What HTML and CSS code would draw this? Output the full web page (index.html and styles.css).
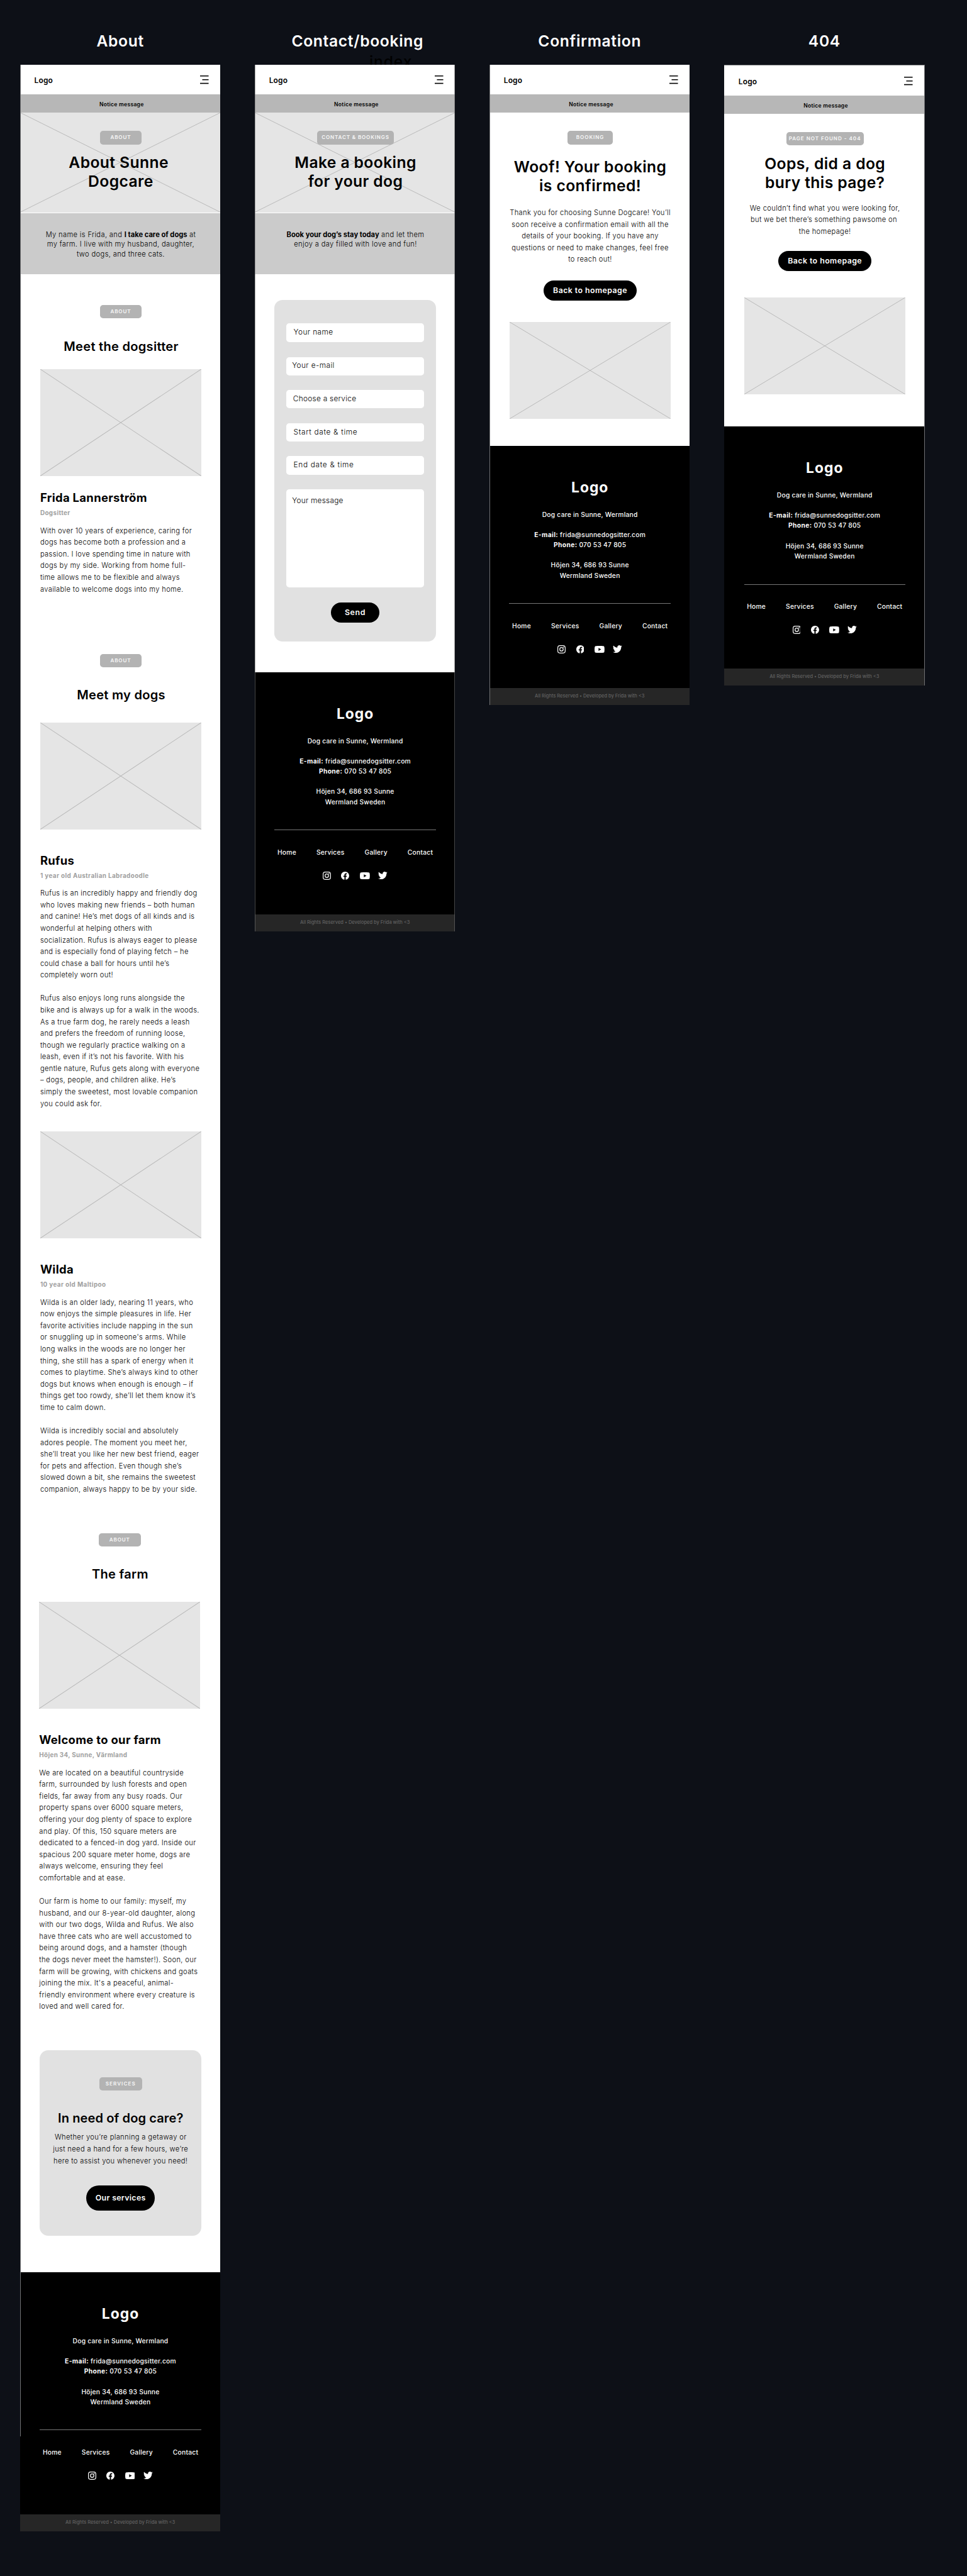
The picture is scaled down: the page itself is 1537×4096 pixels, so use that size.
FILE: index.html
```
<!DOCTYPE html>
<html lang="en">
<head>
<meta charset="utf-8">
<title>Sunne Dogcare – mobile wireframes</title>
<link rel="stylesheet" href="styles.css">
</head>
<body>
<svg class="sprite" aria-hidden="true">
  <symbol id="burger" viewBox="0 0 17 17"><path d="M0 1h17M4.3 8.3H17M0 15.600h17" stroke="#000" stroke-width="2" fill="none"/></symbol>
  <symbol id="cross" viewBox="0 0 100 100" preserveAspectRatio="none"><path d="M0 0L100 100M100 0L0 100" stroke="#b9b9b9" stroke-width="1" fill="none" vector-effect="non-scaling-stroke"/></symbol>
  <symbol id="instagram" viewBox="0 0 16 16"><rect x=".75" y=".75" width="14.500" height="14.500" rx="4" fill="none" stroke="#fff" stroke-width="1.500"/><circle cx="8" cy="8" r="3.400" fill="none" stroke="#fff" stroke-width="1.500"/><circle cx="12.200" cy="3.800" r="1" fill="#fff"/></symbol>
  <symbol id="facebook" viewBox="8 8 496 496"><path fill="#fff" d="M504 256C504 119 393 8 256 8S8 119 8 256c0 123.780 90.690 226.380 209.250 245V327.690h-63V256h63v-54.640c0-62.150 37-96.480 93.670-96.480 27.140 0 55.520 4.840 55.520 4.840v61h-31.280c-30.800 0-40.410 19.120-40.410 38.730V256h68.780l-11 71.690h-57.780V501C413.310 482.380 504 379.780 504 256z"/></symbol>
  <symbol id="youtube" viewBox="14 64 548 384"><path fill="#fff" d="M549.655 124.083c-6.281-23.650-24.787-42.276-48.284-48.597C458.781 64 288 64 288 64S117.220 64 74.629 75.486c-23.497 6.322-42.003 24.947-48.284 48.597-11.412 42.867-11.412 132.305-11.412 132.305s0 89.438 11.412 132.305c6.281 23.650 24.787 41.500 48.284 47.821C117.220 448 288 448 288 448s170.780 0 213.371-11.486c23.497-6.321 42.003-24.171 48.284-47.821 11.412-42.867 11.412-132.305 11.412-132.305s0-89.438-11.412-132.305zm-317.510 213.508V175.185l142.739 81.205-142.739 81.201z"/></symbol>
  <symbol id="twitter" viewBox="0 48 512 416"><path fill="#fff" d="M459.370 151.716c.325 4.548.325 9.097.325 13.645 0 138.720-105.583 298.558-298.558 298.558-59.452 0-114.680-17.219-161.137-47.106 8.447.974 16.568 1.299 25.340 1.299 49.055 0 94.213-16.568 130.274-44.832-46.132-.975-84.792-31.188-98.112-72.772 6.498.974 12.995 1.624 19.818 1.624 9.421 0 18.843-1.300 27.614-3.573-48.081-9.747-84.143-51.980-84.143-102.985v-1.299c13.969 7.797 30.214 12.670 47.431 13.319-28.264-18.843-46.781-51.005-46.781-87.391 0-19.492 5.197-37.360 14.294-52.954 51.655 63.675 129.300 105.258 216.365 109.807-1.624-7.797-2.599-15.918-2.599-24.040 0-57.828 46.782-104.934 104.934-104.934 30.213 0 57.502 12.670 76.670 33.137 23.715-4.548 46.456-13.320 66.599-25.340-7.798 24.366-24.366 44.833-46.132 57.827 21.117-2.273 41.584-8.122 60.426-16.243-14.292 20.791-32.161 39.308-52.628 54.253z"/></symbol>
</svg>

<main class="board">

  <article class="screen">
    <h1 class="screen-title">About</h1>
    <div class="phone phone-about">
      <header class="nav"><span class="nav-logo">Logo</span><svg class="burger"><use href="#burger"/></svg></header>
      <p class="notice">Notice message</p>
      <section class="hero">
        <svg class="cross"><use href="#cross"/></svg>
        <span class="badge">ABOUT</span>
        <h2 class="headline">About Sunne&nbsp;<br>Dogcare</h2>
      </section>
      <p class="intro">My name is Frida, and <b>I take care of dogs</b> at<br>my farm. I live with my husband, daughter,<br>two dogs, and three cats.</p>

      <section class="block block-sitter">
        <span class="badge">ABOUT</span>
        <h2 class="block-title">Meet the dogsitter</h2>
        <svg class="picture"><use href="#cross"/></svg>
        <h3 class="name">Frida Lannerström</h3>
        <p class="role">Dogsitter</p>
        <p class="copy">With over 10 years of experience, caring for<br>dogs has become both a profession and a<br>passion. I love spending time in nature with<br>dogs by my side. Working from home full-<br>time allows me to be flexible and always<br>available to welcome dogs into my home.</p>
      </section>

      <section class="block block-dogs">
        <span class="badge">ABOUT</span>
        <h2 class="block-title">Meet my dogs</h2>
        <svg class="picture"><use href="#cross"/></svg>
        <h3 class="name">Rufus</h3>
        <p class="role">1 year old Australian Labradoodle</p>
        <p class="copy">Rufus is an incredibly happy and friendly dog<br>who loves making new friends – both human<br>and canine! He’s met dogs of all kinds and is<br>wonderful at helping others with<br>socialization. Rufus is always eager to please<br>and is especially fond of playing fetch – he<br>could chase a ball for hours until he’s<br>completely worn out!</p>
        <p class="copy copy-next">Rufus also enjoys long runs alongside the<br>bike and is always up for a walk in the woods.<br>As a true farm dog, he rarely needs a leash<br>and prefers the freedom of running loose,<br>though we regularly practice walking on a<br>leash, even if it’s not his favorite. With his<br>gentle nature, Rufus gets along with everyone<br>– dogs, people, and children alike. He’s<br>simply the sweetest, most lovable companion<br>you could ask for.</p>
        <svg class="picture picture-second"><use href="#cross"/></svg>
        <h3 class="name">Wilda</h3>
        <p class="role">10 year old Maltipoo</p>
        <p class="copy">Wilda is an older lady, nearing 11 years, who<br>now enjoys the simple pleasures in life. Her<br>favorite activities include napping in the sun<br>or snuggling up in someone's arms. While<br>long walks in the woods are no longer her<br>thing, she still has a spark of energy when it<br>comes to playtime. She’s always kind to other<br>dogs but knows when enough is enough – if<br>things get too rowdy, she’ll let them know it’s<br>time to calm down.</p>
        <p class="copy copy-next">Wilda is incredibly social and absolutely<br>adores people. The moment you meet her,<br>she’ll treat you like her new best friend, eager<br>for pets and affection. Even though she’s<br>slowed down a bit, she remains the sweetest<br>companion, always happy to be by your side.</p>
      </section>

      <section class="block block-farm">
        <span class="badge">ABOUT</span>
        <h2 class="block-title">The farm</h2>
        <svg class="picture"><use href="#cross"/></svg>
        <h3 class="name">Welcome to our farm</h3>
        <p class="role role-address">Höjen 34, Sunne, Värmland</p>
        <p class="copy">We are located on a beautiful countryside<br>farm, surrounded by lush forests and open<br>fields, far away from any busy roads. Our<br>property spans over 6000 square meters,<br>offering your dog plenty of space to explore<br>and play. Of this, 150 square meters are<br>dedicated to a fenced-in dog yard. Inside our<br>spacious 200 square meter home, dogs are<br>always welcome, ensuring they feel<br>comfortable and at ease.</p>
        <p class="copy copy-next">Our farm is home to our family: myself, my<br>husband, and our 8-year-old daughter, along<br>with our two dogs, Wilda and Rufus. We also<br>have three cats who are well accustomed to<br>being around dogs, and a hamster (though<br>the dogs never meet the hamster!). Soon, our<br>farm will be growing, with chickens and goats<br>joining the mix. It's a peaceful, animal-<br>friendly environment where every creature is<br>loved and well cared for.</p>
      </section>

      <section class="cta">
        <span class="badge badge-services">SERVICES</span>
        <h2 class="block-title">In need of dog care?</h2>
        <p class="cta-copy">Whether you’re planning a getaway or<br>just need a hand for a few hours, we’re<br>here to assist you whenever you need!</p>
        <a class="button button-services">Our services</a>
      </section>

      <footer class="footer">
        <p class="footer-logo">Logo</p>
        <address class="contact"><p>Dog care in Sunne, Wermland</p><p><b>E-mail:</b> frida@sunnedogsitter.com<br><b>Phone:</b> 070 53 47 805</p><p>Höjen 34, 686 93 Sunne<br>Wermland Sweden</p></address>
        <nav class="links"><a>Home</a><a>Services</a><a>Gallery</a><a>Contact</a></nav>
        <div class="social"><svg class="ico-ig"><use href="#instagram"/></svg><svg class="ico-fb"><use href="#facebook"/></svg><svg class="ico-yt"><use href="#youtube"/></svg><svg class="ico-tw"><use href="#twitter"/></svg></div>
        <p class="legal">All Rights Reserved • Developed by Frida with &lt;3</p>
      </footer>
    </div>
  </article>

  <article class="screen">
    <h1 class="screen-title screen-title-contact">Contact/booking</h1>
    <span class="stray-label">index</span>
    <div class="phone phone-contact">
      <header class="nav"><span class="nav-logo">Logo</span><svg class="burger"><use href="#burger"/></svg></header>
      <p class="notice">Notice message</p>
      <section class="hero">
        <svg class="cross"><use href="#cross"/></svg>
        <span class="badge badge-wide badge-contact">CONTACT &amp; BOOKINGS</span>
        <h2 class="headline">Make a booking<br>for your dog</h2>
      </section>
      <p class="intro"><b>Book your dog’s stay today</b> and let them<br>enjoy a day filled with love and fun!</p>
      <form class="form">
        <div class="field field-name">Your name</div>
        <div class="field field-email">Your e-mail</div>
        <div class="field field-service">Choose a service</div>
        <div class="field field-start">Start date &amp; time</div>
        <div class="field field-end">End date &amp; time</div>
        <div class="field field-message">Your message</div>
        <a class="button button-send">Send</a>
      </form>
      <footer class="footer">
        <p class="footer-logo">Logo</p>
        <address class="contact"><p>Dog care in Sunne, Wermland</p><p><b>E-mail:</b> frida@sunnedogsitter.com<br><b>Phone:</b> 070 53 47 805</p><p>Höjen 34, 686 93 Sunne<br>Wermland Sweden</p></address>
        <nav class="links"><a>Home</a><a>Services</a><a>Gallery</a><a>Contact</a></nav>
        <div class="social"><svg class="ico-ig"><use href="#instagram"/></svg><svg class="ico-fb"><use href="#facebook"/></svg><svg class="ico-yt"><use href="#youtube"/></svg><svg class="ico-tw"><use href="#twitter"/></svg></div>
        <p class="legal">All Rights Reserved • Developed by Frida with &lt;3</p>
      </footer>
    </div>
  </article>

  <article class="screen">
    <h1 class="screen-title">Confirmation</h1>
    <div class="phone phone-confirm">
      <header class="nav"><span class="nav-logo">Logo</span><svg class="burger"><use href="#burger"/></svg></header>
      <p class="notice">Notice message</p>
      <section class="message message-confirm">
        <span class="badge badge-booking">BOOKING</span>
        <h2 class="headline headline-confirm">Woof! Your booking<br>is confirmed!</h2>
        <p class="message-copy">Thank you for choosing Sunne Dogcare! You’ll<br>soon receive a confirmation email with all the<br>details of your booking. If you have any<br>questions or need to make changes, feel free<br>to reach out!</p>
        <a class="button button-home">Back to homepage</a>
        <svg class="picture"><use href="#cross"/></svg>
      </section>
      <footer class="footer">
        <p class="footer-logo">Logo</p>
        <address class="contact"><p>Dog care in Sunne, Wermland</p><p><b>E-mail:</b> frida@sunnedogsitter.com<br><b>Phone:</b> 070 53 47 805</p><p>Höjen 34, 686 93 Sunne<br>Wermland Sweden</p></address>
        <nav class="links"><a>Home</a><a>Services</a><a>Gallery</a><a>Contact</a></nav>
        <div class="social"><svg class="ico-ig"><use href="#instagram"/></svg><svg class="ico-fb"><use href="#facebook"/></svg><svg class="ico-yt"><use href="#youtube"/></svg><svg class="ico-tw"><use href="#twitter"/></svg></div>
        <p class="legal">All Rights Reserved • Developed by Frida with &lt;3</p>
      </footer>
    </div>
  </article>

  <article class="screen">
    <h1 class="screen-title">404</h1>
    <div class="phone phone-missing">
      <header class="nav"><span class="nav-logo">Logo</span><svg class="burger"><use href="#burger"/></svg></header>
      <p class="notice">Notice message</p>
      <section class="message message-missing">
        <span class="badge badge-wide badge-missing">PAGE NOT FOUND - 404</span>
        <h2 class="headline headline-missing">Oops, did a dog<br>bury this page?</h2>
        <p class="message-copy">We couldn’t find what you were looking for,<br>but we bet there’s something pawsome on&nbsp;<br>the homepage!</p>
        <a class="button button-home">Back to homepage</a>
        <svg class="picture"><use href="#cross"/></svg>
      </section>
      <footer class="footer">
        <p class="footer-logo">Logo</p>
        <address class="contact"><p>Dog care in Sunne, Wermland</p><p><b>E-mail:</b> frida@sunnedogsitter.com<br><b>Phone:</b> 070 53 47 805</p><p>Höjen 34, 686 93 Sunne<br>Wermland Sweden</p></address>
        <nav class="links"><a>Home</a><a>Services</a><a>Gallery</a><a>Contact</a></nav>
        <div class="social"><svg class="ico-ig"><use href="#instagram"/></svg><svg class="ico-fb"><use href="#facebook"/></svg><svg class="ico-yt"><use href="#youtube"/></svg><svg class="ico-tw"><use href="#twitter"/></svg></div>
        <p class="legal">All Rights Reserved • Developed by Frida with &lt;3</p>
      </footer>
    </div>
  </article>

</main>
</body>
</html>
```
FILE: styles.css
```
/* 1rem is ten design units; the whole board scales from this one value */
html { font-size: 8.0895px; }
*, *::before, *::after { box-sizing: border-box; }
body { margin: 0; background: #0d1017; color: #000; font-family: Inter, "Liberation Sans", sans-serif; font-size: 1.38rem; white-space: nowrap; }
h1, h2, h3, p, form { margin: 0; }
svg { display: block; }
.sprite { position: absolute; width: 0; height: 0; }

.board { display: flex; align-items: flex-start; gap: 6.77rem; height: 506.2rem; padding: 6.03rem 0 0 3.95rem; overflow: hidden; }
.screen { position: relative; flex: none; width: 39.35rem; }
.screen-title { height: 4rem; margin-bottom: 2.66rem; color: #fff; font-size: 3.05rem; line-height: 4rem; font-weight: 600; letter-spacing: .026em; text-align: center; }
.screen-title-contact { padding-left: 1rem; }
.stray-label { position: absolute; left: 22.5rem; top: 4.15rem; font-size: 3.05rem; line-height: 4rem; font-weight: 500; letter-spacing: .034em; }

.phone { position: relative; display: flex; flex-direction: column; background: #fff; }
.phone::after { content: ""; position: absolute; inset: 0; border: 0 solid #707173; }
.phone-about::after { bottom: 18.7rem; border-left-width: 1px; }
.phone-contact::after { border-left-width: 1px; border-right-width: 1px; border-color: rgba(115, 115, 115, .6); }
.phone-confirm::after { border-left-width: 1px; }
.phone-missing { border-top: 1px solid #77787a; }
.phone-missing::after { border-right-width: 1px; }

.nav { display: flex; justify-content: space-between; align-items: flex-start; height: 5.89rem; padding: 2.18rem 2.3rem 0 2.8rem; }
.nav-logo { font-size: 1.48rem; line-height: 2rem; font-weight: 600; letter-spacing: .012em; }
.burger { width: 1.7rem; height: 1.7rem; margin-top: .03rem; }
.phone-missing .nav { height: 5.97rem; padding-top: 2.28rem; }
.phone-missing .burger { margin-top: 0; }
.notice { height: 3.6rem; padding: .94rem 0 0 .54rem; background: #b7b7b7; font-size: 1.06rem; line-height: 2rem; font-weight: 600; letter-spacing: .032em; text-align: center; }

.badge { display: block; width: 8.25rem; height: 2.6rem; border-radius: .6rem; background: #b3b3b3; color: #f7f7f7; font-size: 1rem; line-height: 2.6rem; font-weight: 600; letter-spacing: .105em; text-align: center; }
.badge-wide { width: 15.2rem; }
.badge-booking { width: 9rem; letter-spacing: .117em; }
.badge-services { width: 8.45rem; letter-spacing: .132em; }
.badge-missing { letter-spacing: .12em; }
.headline { font-size: 3.05rem; line-height: 3.71rem; font-weight: 600; letter-spacing: .016em; text-align: center; }

.hero { position: relative; display: flex; flex-direction: column; align-items: center; height: 19.71rem; padding: 3.6rem 0 0 .2rem; background: #e5e5e5; border-bottom: 1px solid #fff; }
.hero .headline { margin-top: 1.71rem; }
.hero .badge, .hero .headline { position: relative; }
.cross { position: absolute; left: 0; top: 0; width: 100%; height: 100%; }
.intro { height: 12rem; padding: 3.33rem 0 0 .2rem; background: #cbcbcb; font-weight: 360; line-height: 1.9rem; letter-spacing: .031em; text-align: center; }
.intro b { font-weight: 700; letter-spacing: 0; }

.picture { width: 31.63rem; height: 21rem; background: #e5e5e5; }
.block { padding-left: 3.95rem; }
.block .badge { margin-left: 11.7rem; }
.block-title { font-size: 2.48rem; line-height: 3rem; font-weight: 600; letter-spacing: .014em; text-align: center; }
.block .block-title { width: 31.8rem; margin-top: 3.98rem; }
.block .picture { margin-top: 3.93rem; }
.name { margin-top: 4.71rem; font-size: 2.28rem; line-height: 2.8rem; font-weight: 700; letter-spacing: .017em; }
.role { margin-top: .77rem; color: #a0a0a0; font-size: 1.22rem; line-height: 1.6rem; font-weight: 700; letter-spacing: .04em; }
.role-address { letter-spacing: .036em; }
.copy { margin-top: 1.57rem; font-weight: 360; line-height: 2.297rem; letter-spacing: .031em; }
.copy-next { margin-top: 2.297rem; }
.block-sitter { padding-top: 6.13rem; }
.block-sitter .picture, .block-sitter .name { margin-top: 2.93rem; }
.block-dogs { padding-top: 11.54rem; }
.block-dogs .picture-second { margin-top: 4.32rem; }
.block-farm { padding: 7.48rem 0 0 3.75rem; }

.cta { display: flex; flex-direction: column; align-items: center; width: 31.8rem; height: 36.38rem; margin: 7.49rem 0 7.16rem 3.85rem; padding-top: 5.3rem; border-radius: 1.7rem; background: #e1e1e1; }
.cta .block-title { margin-top: 3.93rem; letter-spacing: .005em; }
.cta-copy { margin-top: 1.12rem; font-weight: 360; line-height: 2.33rem; letter-spacing: .031em; text-align: center; }

.button { display: block; height: 4.03rem; border-radius: 2.5rem; background: #000; color: #fff; font-size: 1.53rem; line-height: 4.03rem; font-weight: 600; letter-spacing: .025em; text-align: center; }
.button-services { width: 13.43rem; height: 4.97rem; margin-top: 3.6rem; line-height: 4.97rem; }
.button-send { width: 9.47rem; margin-top: 2.86rem; letter-spacing: .05em; }
.button-home { width: 18.36rem; letter-spacing: .035em; }

.form { display: flex; flex-direction: column; align-items: center; width: 31.77rem; height: 67.1rem; margin: 5.11rem 0 6rem 3.83rem; padding-top: 4.6rem; border-radius: 1.6rem; background: #e1e1e1; }
.field { width: 27.1rem; height: 3.6rem; margin-bottom: 2.9rem; padding: .7rem 0 0 1.45rem; border-radius: .6rem; background: #fff; font-size: 1.47rem; line-height: 2rem; font-weight: 360; letter-spacing: .032em; }
.field-name { margin-bottom: 3rem; }
.field-email { padding-left: 1.15rem; }
.field-service { padding-left: 1.35rem; letter-spacing: .022em; }
.field-start, .field-end { letter-spacing: .055em; }
.field-message { height: 19.34rem; margin-bottom: 0; padding: 1.27rem 0 0 1.15rem; letter-spacing: .02em; }

.message { display: flex; flex-direction: column; align-items: center; padding: 3.6rem 0 5.3rem .2rem; }
.message-copy { font-weight: 360; line-height: 2.297rem; letter-spacing: .031em; text-align: center; }
.message .picture { height: 19.03rem; }
.headline-confirm { margin: 2.58rem 0 2.31rem; }
.message-confirm .button { margin: 2.91rem 0 4.16rem; }
.message-missing { padding-bottom: 6.28rem; }
.headline-missing { margin: 1.66rem 0 2.1rem; }
.message-missing .button { margin: 2.63rem 0 5.16rem; }

.footer { display: flex; flex-direction: column; align-items: center; height: 50.98rem; padding: 6.63rem 0 0 .1rem; background: #000; color: #fff; font-size: 1.27rem; font-weight: 480; line-height: 2rem; letter-spacing: .023em; }
.footer-logo { font-size: 2.82rem; line-height: 3.4rem; font-weight: 700; letter-spacing: .045em; }
.contact { display: flex; flex-direction: column; align-items: center; gap: 2rem; width: 31.7rem; margin-top: 2.47rem; padding-bottom: 4.52rem; border-bottom: 1px solid #777; font-style: normal; text-align: center; }
.contact b { font-weight: 700; letter-spacing: .035em; }
.links { display: flex; gap: 3.95rem; margin-top: 3.25rem; }
.social { display: flex; align-items: center; gap: 2rem; height: 1.6rem; margin-top: 2.85rem; }
.ico-ig, .ico-fb { width: 1.6rem; height: 1.6rem; }
.ico-yt { width: 1.97rem; height: 1.38rem; }
.ico-tw { width: 1.83rem; height: 1.5rem; margin-left: -.33rem; }
.legal { align-self: stretch; height: 3.37rem; margin: auto 0 0 -.1rem; background: #262626; color: #606060; font-size: .93rem; line-height: 3.17rem; letter-spacing: -.004em; text-align: center; }
```
